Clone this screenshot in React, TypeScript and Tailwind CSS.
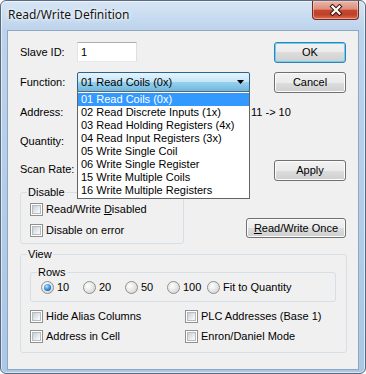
import type { ReactNode } from 'react';

const FUNCTIONS = [
  '01 Read Coils (0x)',
  '02 Read Discrete Inputs (1x)',
  '03 Read Holding Registers (4x)',
  '04 Read Input Registers (3x)',
  '05 Write Single Coil',
  '06 Write Single Register',
  '15 Write Multiple Coils',
  '16 Write Multiple Registers',
];

function Checkbox({ label }: { label: ReactNode }) {
  return (
    <div className="flex items-center gap-[3px] h-[13px]">
      <span className="block w-[13px] h-[13px] border border-[#8e8f8f] bg-white p-[1px]">
        <span className="block w-full h-full border border-[#b6bbc1] bg-[linear-gradient(135deg,#c9cdd3,#eef0f2_70%,#fbfbfb)]" />
      </span>
      <span className="leading-[13px] whitespace-nowrap">{label}</span>
    </div>
  );
}

function Radio({ label, checked, className }: { label: string; checked?: boolean; className?: string }) {
  return (
    <div className={`flex items-center gap-[3px] h-[13px] ${className ?? ''}`}>
      <span className="flex items-center justify-center w-[13px] h-[13px] rounded-full border border-[#8e8f8f] bg-[radial-gradient(circle_at_35%_35%,#ffffff,#e4e4e4_55%,#c9c9c9)]">
        {checked && (
          <span className="block w-[7px] h-[7px] rounded-full bg-[radial-gradient(circle_at_40%_35%,#b8e6ff,#2a86d6_55%,#0d4c8f)]" />
        )}
      </span>
      <span className="leading-[13px] whitespace-nowrap">{label}</span>
    </div>
  );
}

function Button({ children, isDefault, className }: { children: ReactNode; isDefault?: boolean; className?: string }) {
  const border = isDefault
    ? 'border-[#3c7fb1] shadow-[inset_0_0_0_1px_#5fd4f8]'
    : 'border-[#707070] shadow-[inset_0_0_0_1px_#fcfcfc]';
  return (
    <div
      className={`flex items-center justify-center rounded-[3px] border bg-[linear-gradient(#f2f2f2,#ebebeb_50%,#dddddd_50%,#cfcfcf)] ${border} ${className ?? ''}`}
    >
      {children}
    </div>
  );
}

function GroupBox({ title, className, children }: { title: string; className?: string; children?: ReactNode }) {
  return (
    <div className={`relative rounded-[3px] border border-[#d5dfe5] ${className ?? ''}`}>
      <span className="absolute -top-[7px] left-[6px] px-[1px] leading-[13px] bg-[#f0f0f0]">{title}</span>
      {children}
    </div>
  );
}

export default function App() {
  return (
    <div className="w-[366px] h-[374px] flex flex-col rounded-[6px] border border-[#5a6b80] bg-[linear-gradient(to_bottom,#d6e5f4,#bcd3ec_30px,#aac7e6)] shadow-[inset_0_0_0_1px_rgba(255,255,255,0.55)] text-[11px] text-black font-['Liberation_Sans',Arial,sans-serif] overflow-hidden">
      {/* Title bar */}
      <div className="h-[29px] flex items-start shrink-0">
        <div className="h-[28px] pl-[7px] flex items-center text-[12px] text-[#141414] font-['Noto_Sans',sans-serif] [text-shadow:0_0_6px_#ffffff,0_0_3px_#ffffff]">
          Read/Write Definition
        </div>
        <div className="ml-auto mr-[6px] w-[47px] h-[19px] rounded-b-[4px] border border-t-0 border-[#6e2b22] bg-[linear-gradient(#ebb5a7,#dc907e_45%,#c6472f_52%,#c0402a_75%,#dc6a4f)] shadow-[inset_0_0_0_1px_rgba(255,220,210,0.5)] flex items-center justify-center">
          <svg width="14" height="12" viewBox="0 0 14 12">
            <path d="M3.5 2.5 L10.5 9.5 M10.5 2.5 L3.5 9.5" stroke="#3b1611" strokeWidth="4.2" strokeLinecap="square" />
            <path d="M3.5 2.5 L10.5 9.5 M10.5 2.5 L3.5 9.5" stroke="#ffffff" strokeWidth="2.2" strokeLinecap="square" />
          </svg>
        </div>
      </div>

      {/* Client area */}
      <div className="mx-[6px] h-[340px] border border-[#8fa6bf] bg-[#f0f0f0] px-[12px] pt-[11px]">
        <div className="flex">
          <div className="flex-1 min-w-0 flex flex-col">
            <div className="flex items-center h-[20px]">
              <span className="w-[57px]">Slave ID:</span>
              <div className="w-[60px] h-[20px] border border-[#abadb3] border-l-[#e2e3ea] border-r-[#dbdfe6] border-b-[#e3e9ef] bg-white pl-[3px] flex items-center">
                1
              </div>
            </div>
            <div className="flex items-center h-[20px] mt-[10px]">
              <span className="w-[57px]">Function:</span>
              <div className="relative w-[173px] h-[20px] rounded-[2px] border border-[#2c628b] bg-[linear-gradient(#e5f4fc,#c4e5f6_50%,#98d1ef_50%,#6fb8de)] flex items-center pl-[3px]">
                <span>01 Read Coils (0x)</span>
                <svg className="ml-auto mr-[5px]" width="7" height="4" viewBox="0 0 7 4">
                  <polygon points="0,0 7,0 3.5,4" fill="#000" />
                </svg>
                <div className="absolute top-[18px] -left-[1px] w-[173px] border border-[#646464] bg-white z-10 py-[1px]">
                  {FUNCTIONS.map((f, i) => (
                    <div
                      key={f}
                      className={`h-[13px] leading-[13px] pl-[3px] whitespace-nowrap ${i === 0 ? 'bg-[#3399ff] text-white' : ''}`}
                    >
                      {f}
                    </div>
                  ))}
                </div>
              </div>
            </div>
            <div className="flex items-center h-[20px] mt-[10px]">
              <span className="w-[57px] shrink-0">Address:</span>
              <span className="w-[173px] shrink-0" />
              <span className="ml-[1px] shrink-0 whitespace-nowrap">11 -&gt; 10</span>
            </div>
            <div className="flex items-center h-[20px] mt-[9px]">
              <span className="w-[57px]">Quantity:</span>
            </div>
            <div className="flex items-center h-[20px] mt-[8px]">
              <span className="w-[57px]">Scan Rate:</span>
            </div>
          </div>
          <div className="w-[72px] shrink-0 flex flex-col">
            <Button isDefault className="h-[21px]">OK</Button>
            <Button className="h-[21px] mt-[9px]">Cancel</Button>
            <Button className="h-[21px] mt-[67px]">Apply</Button>
          </div>
        </div>

        <div className="flex items-start mt-[11px]">
          <GroupBox title="Disable" className="w-[164px] h-[52px] pt-[10px] pl-[9px]">
            <Checkbox label={<>Read/Write <span className="underline">D</span>isabled</>} />
            <div className="mt-[8px]">
              <Checkbox label="Disable on error" />
            </div>
          </GroupBox>
          <Button className="ml-auto mt-[26px] w-[100px] h-[20px]">
            <span><span className="underline">R</span>ead/Write Once</span>
          </Button>
        </div>

        <GroupBox title="View" className="mt-[10px] w-[327px] h-[99px] pt-[17px] pl-[9px]">
          <GroupBox title="Rows" className="w-[306px] h-[30px] pt-[8px] pl-[10px]">
            <div className="flex">
              <Radio label="10" checked className="w-[42px]" />
              <Radio label="20" className="w-[42px]" />
              <Radio label="50" className="w-[42px]" />
              <Radio label="100" className="w-[40px]" />
              <Radio label="Fit to Quantity" />
            </div>
          </GroupBox>
          <div className="grid grid-cols-[155px_1fr] mt-[8px] gap-y-[7px]">
            <Checkbox label="Hide Alias Columns" />
            <Checkbox label="PLC Addresses (Base 1)" />
            <Checkbox label="Address in Cell" />
            <Checkbox label="Enron/Daniel Mode" />
          </div>
        </GroupBox>
      </div>
    </div>
  );
}
